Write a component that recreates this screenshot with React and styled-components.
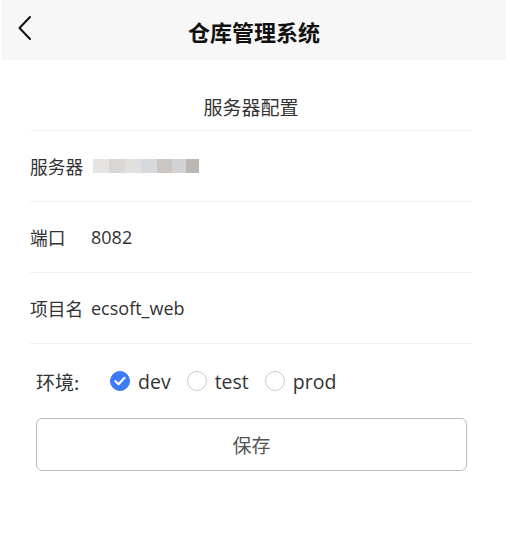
import React, { useState } from 'react';
import styled, { createGlobalStyle } from 'styled-components';

const GlobalStyle = createGlobalStyle`
  body {
    margin: 0;
    background: #fff;
    font-family: "Open Sans", "Noto Sans CJK SC", sans-serif;
    color: #333;
  }
`;

const ENVS = ['dev', 'test', 'prod'];

const App = () => {
    const [env, setEnv] = useState('dev');

    return (
        <>
            <GlobalStyle />
            <Header>
                <BackButton aria-label="back">
                    <svg width="16" height="26" viewBox="0 0 16 26" fill="none">
                        <path d="M13 2 L2.5 13 L13 24" stroke="#111" strokeWidth="2" strokeLinecap="round" strokeLinejoin="round" />
                    </svg>
                </BackButton>
                <Title>仓库管理系统</Title>
            </Header>

            <Content>
                <SectionTitle>服务器配置</SectionTitle>
                <Row>
                    <Label>服务器</Label>
                    <Blurred />
                </Row>
                <Row>
                    <Label>端口</Label>
                    <Value>8082</Value>
                </Row>
                <Row>
                    <Label>项目名</Label>
                    <Value>ecsoft_web</Value>
                </Row>
            </Content>

            <EnvRow>
                <EnvLabel>环境:</EnvLabel>
                {ENVS.map(name => (
                    <Radio key={name} onClick={() => setEnv(name)}>
                        <RadioDot $checked={env === name}>
                            {env === name && (
                                <svg width="12" height="10" viewBox="0 0 12 10" fill="none">
                                    <path d="M1.5 5.2 L4.6 8.2 L10.5 1.8" stroke="#fff" strokeWidth="2.2" strokeLinecap="round" strokeLinejoin="round" />
                                </svg>
                            )}
                        </RadioDot>
                        <RadioText>{name}</RadioText>
                    </Radio>
                ))}
            </EnvRow>

            <SaveButton>保存</SaveButton>
        </>
    );
}

const Header = styled.div`
  height: 60px;
  margin: 0 4px 0 2px;
  background: #f7f7f7;
  display: flex;
  align-items: center;
  justify-content: center;
  position: relative;
`;

const BackButton = styled.div`
  position: absolute;
  left: 15px;
  top: 15px;
  display: flex;
`;

const Title = styled.h1`
  margin: 0;
  font-size: 22px;
  font-weight: 700;
  color: #111;
  font-family: "Noto Sans CJK SC", sans-serif;
  padding-top: 2px;
`;

const Content = styled.div`
  margin: 0 38px 0 30px;
`;

const SectionTitle = styled.div`
  margin-top: 24px;
  height: 46px;
  line-height: 46px;
  text-align: center;
  font-size: 19px;
  color: #333;
  border-bottom: 1px solid #f2f2f2;
  font-family: "Noto Sans CJK SC", sans-serif;
`;

const Row = styled.div`
  height: 70px;
  display: flex;
  align-items: center;
  border-bottom: 1px solid #f0f1f3;
  font-size: 17.7px;
  color: #333;
`;

const Label = styled.span`
  width: 61px;
  font-family: "Noto Sans CJK SC", sans-serif;
`;

const Value = styled.span`
  font-size: 18px;
  color: #333;
`;

const Blurred = styled.span`
  display: inline-block;
  width: 106px;
  height: 14px;
  margin-left: 2px;
  background: linear-gradient(90deg, #e6e3e3 0 15%, #d9d6d6 15% 30%, #e2dfdf 30% 45%, #d6d9de 45% 60%, #cbc6c2 60% 75%, #d3d3d6 75% 88%, #bcb7b2 88% 100%);
  filter: blur(0.6px);
`;

const EnvRow = styled.div`
  display: flex;
  align-items: center;
  height: 74px;
  margin: 0 36px;
`;

const EnvLabel = styled.span`
  font-size: 19px;
  color: #333;
  font-family: "Noto Sans CJK SC", sans-serif;
  width: 74px;
`;

const Radio = styled.label`
  display: flex;
  align-items: center;
  margin-right: 16px;
  cursor: pointer;
`;

const RadioDot = styled.span`
  width: 20px;
  height: 20px;
  box-sizing: border-box;
  border-radius: 50%;
  display: flex;
  align-items: center;
  justify-content: center;
  background: ${p => (p.$checked ? '#3c7bf6' : '#fff')};
  border: 1px solid ${p => (p.$checked ? '#3c7bf6' : '#c8c8c8')};
  margin-right: 8px;
`;

const RadioText = styled.span`
  font-size: 19.5px;
  color: #333;
`;

const SaveButton = styled.button`
  display: block;
  box-sizing: border-box;
  width: 431px;
  height: 53px;
  margin: 0 0 0 36px;
  background: #fff;
  border: 1px solid #bdbdbd;
  border-radius: 6px;
  font-size: 19px;
  color: #555;
  font-family: "Noto Sans CJK SC", sans-serif;
`;

export default App;
